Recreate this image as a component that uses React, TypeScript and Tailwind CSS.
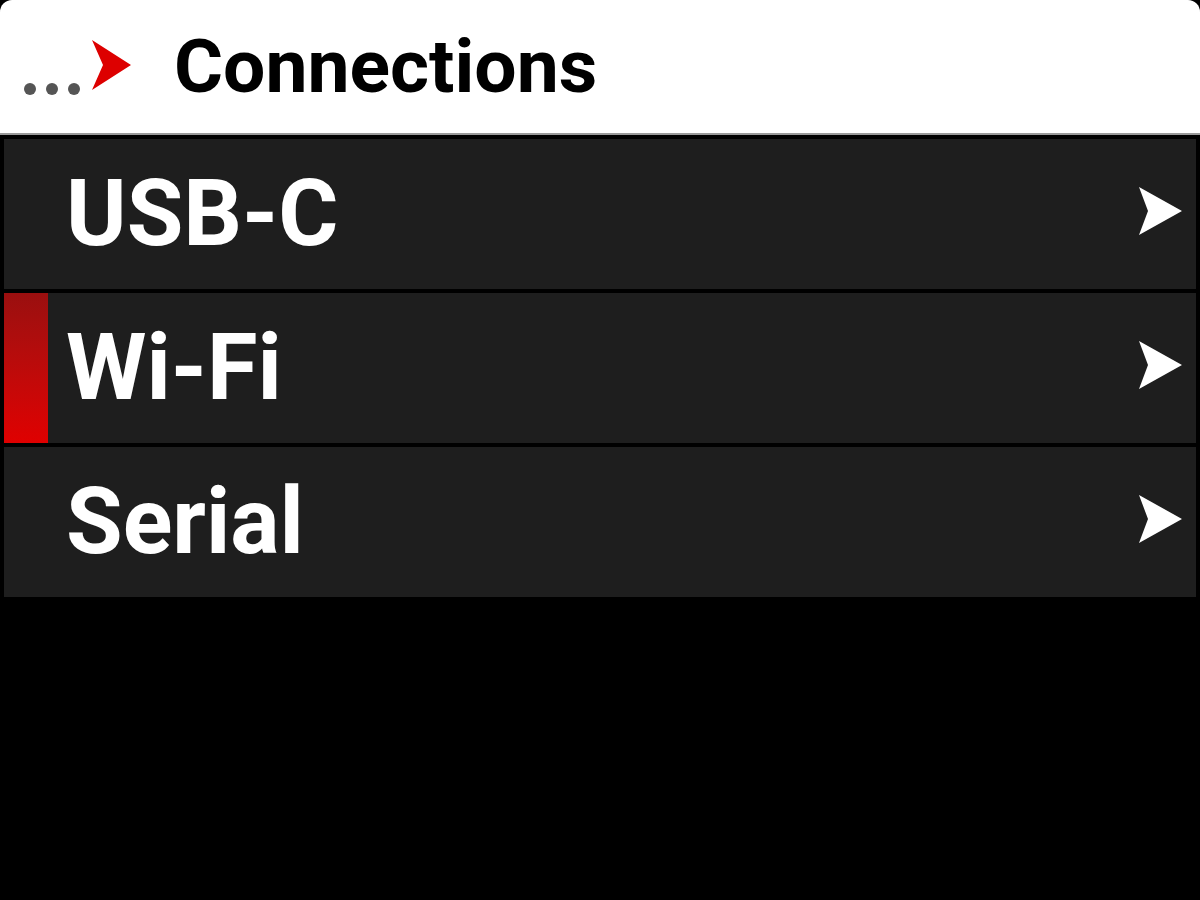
import React from 'react';

const items = [
    { name: 'USB-C', active: false },
    { name: 'Wi-Fi', active: true },
    { name: 'Serial', active: false },
];

function Chevron() {
    return (
        <svg width="44" height="48" viewBox="0 0 44 48" className="shrink-0">
            <polygon points="0,0 43,24 0,48 9,24" fill="#ffffff" />
        </svg>
    );
}

export default function App() {
    return (
        <div className="w-[1200px] h-[900px] bg-black overflow-hidden" style={{ fontFamily: 'Roboto, "Liberation Sans", sans-serif' }}>
            {/* Barre de titre */}
            <div className="h-[135px] bg-white rounded-t-[12px] flex items-center border-b-2 border-[#9a9a9a]">
                <div className="flex items-center gap-[10px] pl-[24px] pt-[44px]">
                    <span className="w-[12px] h-[12px] rounded-full bg-[#555555]" />
                    <span className="w-[12px] h-[12px] rounded-full bg-[#555555]" />
                    <span className="w-[12px] h-[12px] rounded-full bg-[#555555]" />
                </div>
                <svg width="40" height="50" viewBox="0 0 40 50" className="ml-[12px] mt-[-4px] shrink-0">
                    <polygon points="0,0 39,25 0,50 11,25" fill="#dd0000" />
                </svg>
                <h1 className="ml-[42px] text-[75px] font-bold text-black leading-none mt-[0px]">
                    Connections
                </h1>
            </div>

            {/* Liste */}
            <div className="flex flex-col gap-[4px] px-[4px] pt-[4px]">
                {items.map((item) => (
                    <div key={item.name} className="h-[150px] bg-[#1e1e1e] flex items-center">
                        <div className={`w-[44px] h-full shrink-0 ${item.active ? 'bg-gradient-to-b from-[#9a0f0f] to-[#e00000]' : ''}`} />
                        <span className="ml-[18px] flex-1 text-[92px] font-bold text-white leading-none">
                            {item.name}
                        </span>
                        <div className="mr-[13px] mb-[6px]">
                            <Chevron />
                        </div>
                    </div>
                ))}
            </div>
        </div>
    );
}
